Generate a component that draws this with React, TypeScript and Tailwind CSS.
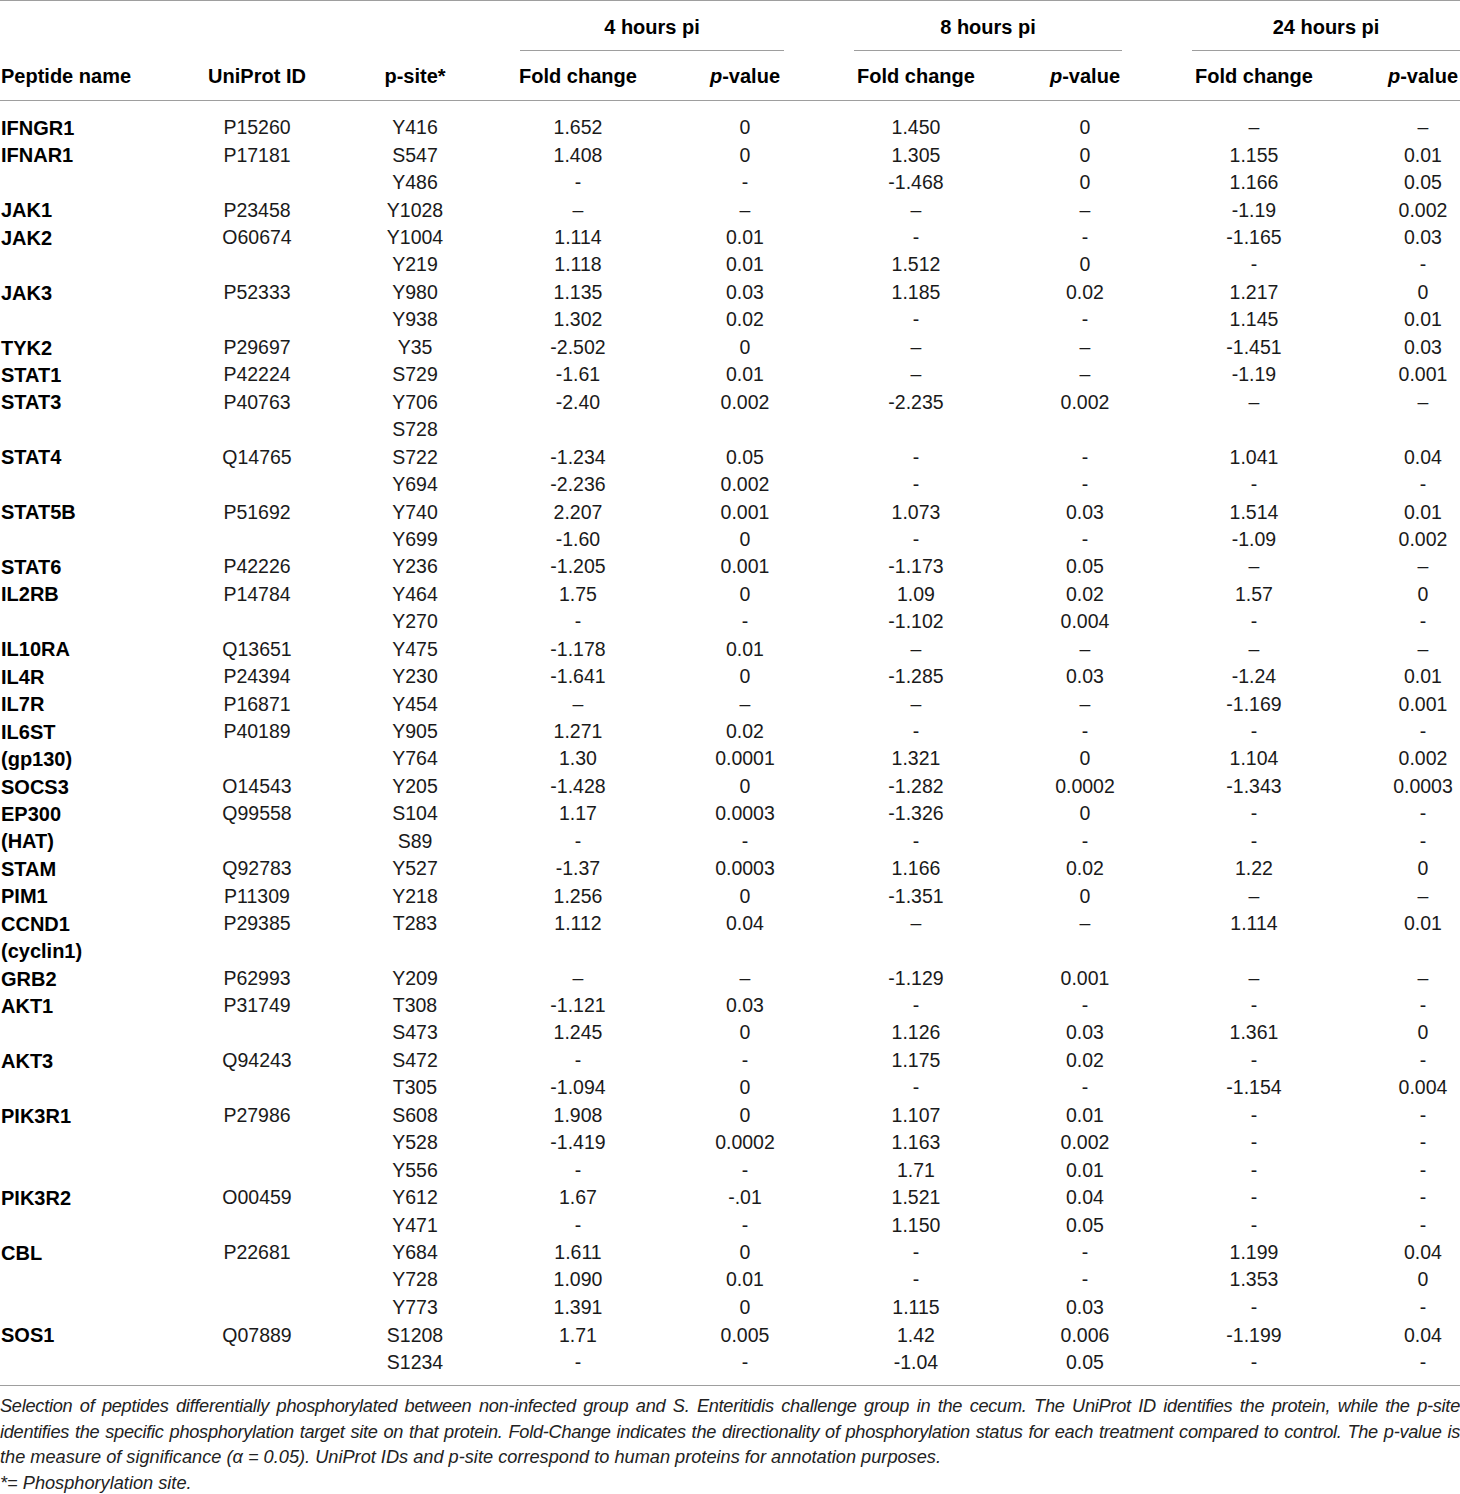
const cols = 'grid grid-cols-[134px_246px_70px_256px_78px_264px_74px_264px_74px]';

type Row = [string, string, string, string, string, string, string, string, string];

const rows: Row[] = [
  ['IFNGR1', 'P15260', 'Y416', '1.652', '0', '1.450', '0', '–', '–'],
  ['IFNAR1', 'P17181', 'S547', '1.408', '0', '1.305', '0', '1.155', '0.01'],
  ['', '', 'Y486', '-', '-', '-1.468', '0', '1.166', '0.05'],
  ['JAK1', 'P23458', 'Y1028', '–', '–', '–', '–', '-1.19', '0.002'],
  ['JAK2', 'O60674', 'Y1004', '1.114', '0.01', '-', '-', '-1.165', '0.03'],
  ['', '', 'Y219', '1.118', '0.01', '1.512', '0', '-', '-'],
  ['JAK3', 'P52333', 'Y980', '1.135', '0.03', '1.185', '0.02', '1.217', '0'],
  ['', '', 'Y938', '1.302', '0.02', '-', '-', '1.145', '0.01'],
  ['TYK2', 'P29697', 'Y35', '-2.502', '0', '–', '–', '-1.451', '0.03'],
  ['STAT1', 'P42224', 'S729', '-1.61', '0.01', '–', '–', '-1.19', '0.001'],
  ['STAT3', 'P40763', 'Y706', '-2.40', '0.002', '-2.235', '0.002', '–', '–'],
  ['', '', 'S728', '', '', '', '', '', ''],
  ['STAT4', 'Q14765', 'S722', '-1.234', '0.05', '-', '-', '1.041', '0.04'],
  ['', '', 'Y694', '-2.236', '0.002', '-', '-', '-', '-'],
  ['STAT5B', 'P51692', 'Y740', '2.207', '0.001', '1.073', '0.03', '1.514', '0.01'],
  ['', '', 'Y699', '-1.60', '0', '-', '-', '-1.09', '0.002'],
  ['STAT6', 'P42226', 'Y236', '-1.205', '0.001', '-1.173', '0.05', '–', '–'],
  ['IL2RB', 'P14784', 'Y464', '1.75', '0', '1.09', '0.02', '1.57', '0'],
  ['', '', 'Y270', '-', '-', '-1.102', '0.004', '-', '-'],
  ['IL10RA', 'Q13651', 'Y475', '-1.178', '0.01', '–', '–', '–', '–'],
  ['IL4R', 'P24394', 'Y230', '-1.641', '0', '-1.285', '0.03', '-1.24', '0.01'],
  ['IL7R', 'P16871', 'Y454', '–', '–', '–', '–', '-1.169', '0.001'],
  ['IL6ST', 'P40189', 'Y905', '1.271', '0.02', '-', '-', '-', '-'],
  ['(gp130)', '', 'Y764', '1.30', '0.0001', '1.321', '0', '1.104', '0.002'],
  ['SOCS3', 'O14543', 'Y205', '-1.428', '0', '-1.282', '0.0002', '-1.343', '0.0003'],
  ['EP300', 'Q99558', 'S104', '1.17', '0.0003', '-1.326', '0', '-', '-'],
  ['(HAT)', '', 'S89', '-', '-', '-', '-', '-', '-'],
  ['STAM', 'Q92783', 'Y527', '-1.37', '0.0003', '1.166', '0.02', '1.22', '0'],
  ['PIM1', 'P11309', 'Y218', '1.256', '0', '-1.351', '0', '–', '–'],
  ['CCND1', 'P29385', 'T283', '1.112', '0.04', '–', '–', '1.114', '0.01'],
  ['(cyclin1)', '', '', '', '', '', '', '', ''],
  ['GRB2', 'P62993', 'Y209', '–', '–', '-1.129', '0.001', '–', '–'],
  ['AKT1', 'P31749', 'T308', '-1.121', '0.03', '-', '-', '-', '-'],
  ['', '', 'S473', '1.245', '0', '1.126', '0.03', '1.361', '0'],
  ['AKT3', 'Q94243', 'S472', '-', '-', '1.175', '0.02', '-', '-'],
  ['', '', 'T305', '-1.094', '0', '-', '-', '-1.154', '0.004'],
  ['PIK3R1', 'P27986', 'S608', '1.908', '0', '1.107', '0.01', '-', '-'],
  ['', '', 'Y528', '-1.419', '0.0002', '1.163', '0.002', '-', '-'],
  ['', '', 'Y556', '-', '-', '1.71', '0.01', '-', '-'],
  ['PIK3R2', 'O00459', 'Y612', '1.67', '-.01', '1.521', '0.04', '-', '-'],
  ['', '', 'Y471', '-', '-', '1.150', '0.05', '-', '-'],
  ['CBL', 'P22681', 'Y684', '1.611', '0', '-', '-', '1.199', '0.04'],
  ['', '', 'Y728', '1.090', '0.01', '-', '-', '1.353', '0'],
  ['', '', 'Y773', '1.391', '0', '1.115', '0.03', '-', '-'],
  ['SOS1', 'Q07889', 'S1208', '1.71', '0.005', '1.42', '0.006', '-1.199', '0.04'],
  ['', '', 'S1234', '-', '-', '-1.04', '0.05', '-', '-'],
];

function PValue() {
  return (
    <span>
      <i>p</i>-value
    </span>
  );
}

function GroupHead({ label }: { label: string }) {
  return (
    <div className="col-span-2 flex items-center justify-center">
      <div className="ml-[70px] flex h-[50px] w-full items-center justify-center border-b border-[#9e9e9e] pt-[2px]">
        {label}
      </div>
    </div>
  );
}

export default function App() {
  return (
    <div className="w-[1460px] bg-white font-['Liberation_Sans',Arial,sans-serif] text-[19.5px] text-[#1a1a1a]">
      <div className="border-t border-[#9e9e9e]">
        {/* header */}
        <div className={`${cols} text-[20px] font-bold text-black`}>
          <div className="col-span-3" />
          <GroupHead label="4 hours pi" />
          <GroupHead label="8 hours pi" />
          <GroupHead label="24 hours pi" />
        </div>
        <div className={`${cols} h-[50px] items-center border-b border-[#9e9e9e] text-[20px] font-bold text-black`}>
          <div className="whitespace-nowrap pl-[1px]">Peptide name</div>
          <div className="whitespace-nowrap text-center">UniProt ID</div>
          <div className="whitespace-nowrap text-center">p-site*</div>
          <div className="text-center">Fold change</div>
          <div className="whitespace-nowrap text-center"><PValue /></div>
          <div className="text-center">Fold change</div>
          <div className="whitespace-nowrap text-center"><PValue /></div>
          <div className="text-center">Fold change</div>
          <div className="whitespace-nowrap text-center"><PValue /></div>
        </div>

        {/* body */}
        <div className="border-b border-[#9e9e9e] pt-[12px] pb-[10px]">
          {rows.map((r, i) => (
            <div key={i} className={`${cols} h-[27.44px] items-center`}>
              <div className="whitespace-nowrap pl-[1px] text-[20px] font-bold text-black">{r[0]}</div>
              {r.slice(1).map((c, j) => (
                <div key={j} className="whitespace-nowrap text-center">{c}</div>
              ))}
            </div>
          ))}
        </div>
      </div>

      {/* caption */}
      <div className="pt-[8px] text-[18.2px] italic leading-[25.5px] text-[#222]">
        <div className="whitespace-nowrap tracking-[-0.015em] [text-align-last:justify]">
          Selection of peptides differentially phosphorylated between non-infected group and S. Enteritidis challenge group in the cecum. The UniProt ID identifies the protein, while the p-site
        </div>
        <div className="whitespace-nowrap tracking-[-0.015em] [text-align-last:justify]">
          identifies the specific phosphorylation target site on that protein. Fold-Change indicates the directionality of phosphorylation status for each treatment compared to control. The p-value is
        </div>
        <div className="whitespace-nowrap">
          the measure of significance (α = 0.05). UniProt IDs and p-site correspond to human proteins for annotation purposes.
        </div>
        <div className="whitespace-nowrap">*= Phosphorylation site.</div>
      </div>
    </div>
  );
}
